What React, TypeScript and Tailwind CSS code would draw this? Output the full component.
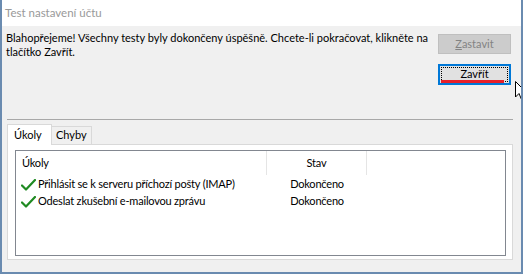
import React from "react";

const font = { fontFamily: 'Lato, "Noto Sans", sans-serif' };

function Check() {
  return (
    <svg width="15" height="12" viewBox="0 0 15 12" className="shrink-0">
      <path d="M1 6.5 L5 10.5 L14 1" fill="none" stroke="#1f8a22" strokeWidth="2.2" strokeLinecap="round" strokeLinejoin="round" />
    </svg>
  );
}

function Cursor() {
  return (
    <svg width="13" height="20" viewBox="0 0 13 20" className="absolute left-[513px] top-[81px]">
      <path d="M0.5 0.5 L0.5 16 L4 12.5 L6.5 18.5 L9 17.5 L6.5 11.5 L11.5 11.5 Z" fill="#ffffff" stroke="#000000" strokeWidth="1" strokeLinejoin="miter" />
    </svg>
  );
}

export default function App() {
  return (
    <div
      className="relative w-[523px] h-[274px] overflow-hidden bg-[#f0f0f0] border-l-2 border-r-2 border-b-2 border-[#6a8bb0] flex flex-col text-[11px] text-black"
      style={font}
    >
      {/* title bar */}
      <div className="h-[26px] bg-white flex items-center pl-[3px] text-[#999999] text-[11.5px] shrink-0 whitespace-nowrap">
        Test nastavení účtu
      </div>

      {/* message + buttons */}
      <div className="flex h-[93px] shrink-0">
        <div className="pl-[4px] pt-[5px] leading-[14px] w-[436px] whitespace-nowrap">
          Blahopřejeme! Všechny testy byly dokončeny úspěšně. Chcete-li pokračovat, klikněte na
          <br />
          tlačítko Zavřít.
        </div>
        <div className="flex flex-col pt-[8px] gap-[10px]">
          <div className="w-[73px] h-[20px] bg-[#cccccc] border border-[#bfbfbf] text-[#838383] flex items-center justify-center">
            <span>
              <span className="underline">Z</span>astavit
            </span>
          </div>
          <div className="relative w-[73px] h-[21px] bg-[#e1e1e1] border-2 border-[#0078d7] p-[1px]">
            <div className="w-full h-full border border-dotted border-black flex items-center justify-center">
              Zavřít
            </div>
            <div className="absolute left-[1px] right-[5px] bottom-0 h-[3px] bg-[#e8202a]" />
          </div>
        </div>
      </div>

      {/* separator */}
      <div className="ml-[5px] mr-[8px] h-px bg-[#a8a8a8] shrink-0" />

      {/* tabs */}
      <div className="ml-[5px] mr-[8px] mt-[4px] flex flex-col">
        <div className="flex items-end h-[20px] relative z-10">
          <div className="w-[45px] h-[21px] bg-white border border-b-0 border-[#d9d9d9] pl-[6px] flex items-center -mb-px">
            Úkoly
          </div>
          <div className="w-[40px] h-[18px] bg-[#f0f0f0] border border-l-0 border-b-0 border-[#d9d9d9] pl-[4px] flex items-center">
            Chyby
          </div>
        </div>
        <div className="h-[116px] bg-white border border-[#d9d9d9] pl-[7px] pr-[6px] pt-[5px] pb-[3px]">
          <div className="h-full border border-[#828790] bg-white flex flex-col tracking-[-0.2px]">
            <div className="flex h-[24px] shrink-0">
              <div className="w-[251px] border-r border-[#e5e5e5] pl-[6px] flex items-center">Úkoly</div>
              <div className="w-[100px] border-r border-[#e5e5e5] flex items-center justify-center">Stav</div>
            </div>
            <div className="flex flex-col pt-[1px]">
              {[
                "Přihlásit se k serveru příchozí pošty (IMAP)",
                "Odeslat zkušební e-mailovou zprávu",
              ].map((t) => (
                <div key={t} className="flex h-[17px] items-center whitespace-nowrap">
                  <div className="w-[251px] flex items-center pl-[5px] gap-[2px]">
                    <Check />
                    <span>{t}</span>
                  </div>
                  <div className="w-[100px] text-center">Dokončeno</div>
                </div>
              ))}
            </div>
          </div>
        </div>
      </div>

      <Cursor />
    </div>
  );
}
